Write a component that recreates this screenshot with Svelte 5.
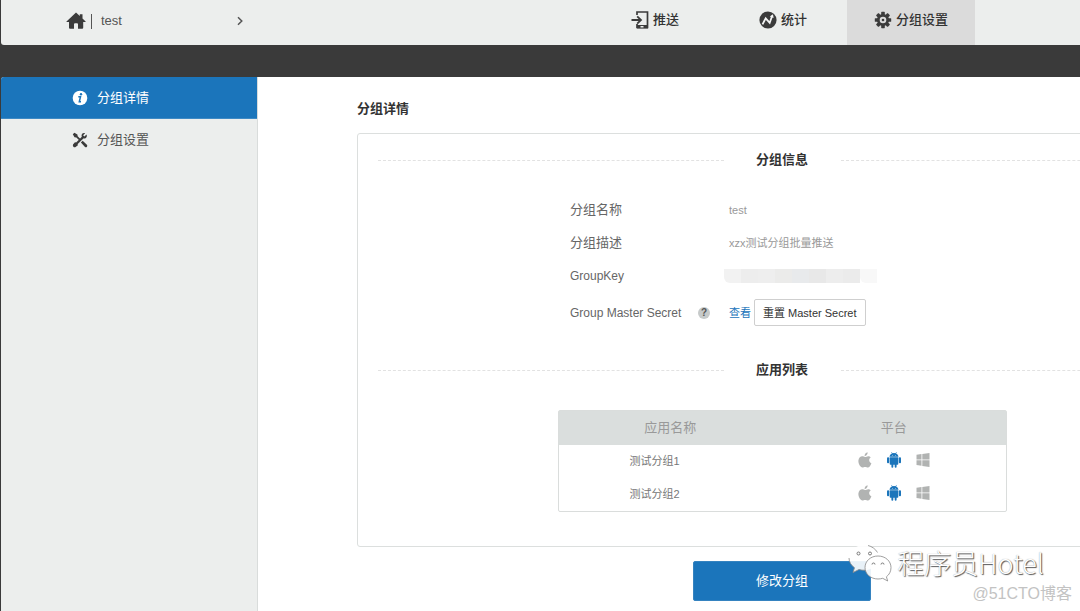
<script>
  const details = [
    { label: '分组名称', value: 'test' },
    { label: '分组描述', value: 'xzx测试分组批量推送' }
  ];
  const apps = ['测试分组1', '测试分组2'];
  const mask = ['#f2f2f2', '#ededed', '#eeeeee', '#ebebea', '#e8eaec', '#e8e8e8', '#ededed', '#ebebeb', '#f8f8f8'];
  const teeth = [0, 45, 90, 135, 180, 225, 270, 315];
</script>

<div class="page">
  <header>
    <div class="brand">
      <a class="home" href="#home" aria-label="Home">
        <svg width="20" height="18" viewBox="0 0 20 18"><path fill="#3b3b3b" d="M10 .5 13.800 4V2.200h2.700v4.300l3.100 2.900q.4.700-.4.700h-2v5.600q0 1-1 1h-4.200v-4.500q0-1-1-1H9q-1 0-1 1v4.500H4q-1 0-1-1v-5.600H.9q-.8 0-.4-.7z" /></svg>
      </a>
      <span class="bar"></span>
      <span class="name">test</span>
      <svg width="8" height="10" viewBox="0 0 8 10"><path d="M2 1.200 5.800 5 2 8.800" fill="none" stroke="#555" stroke-width="1.500" /></svg>
    </div>
    <nav class="tabs">
      <a href="#push">
        <svg width="18" height="18" viewBox="0 0 18 18"><path d="M6 4V1h10.500v15.500H6V13" fill="none" stroke="#3b3b3b" stroke-width="1.700" /><path d="M6 14h11v3.500H6z" fill="#3b3b3b" /><path d="M9.500 15h3v1.500h-3z" fill="#eceeed" /><path d="M.5 9h9M6.200 5.300 10 9l-3.800 3.700" fill="none" stroke="#3b3b3b" stroke-width="1.800" /></svg>
        推送
      </a>
      <a href="#stats">
        <svg width="18" height="18" viewBox="0 0 18 18"><circle cx="9" cy="9" r="8.600" fill="#3b3b3b" /><path d="m3.500 13.300 3.200-6 4 4.500 2.500-7" fill="none" stroke="#f4f5f5" stroke-width="1.800" /><path d="m10.800 5.400 3.200-2.200.6 3.800z" fill="#f4f5f5" /></svg>
        统计
      </a>
      <a class="current" href="#settings">
        <svg width="18" height="18" viewBox="0 0 18 18">
          <g fill="#3b3b3b">{#each teeth as angle}<path d="M7.200 4V1.400q0-.6.600-.6h2.400q.6 0 .6.600V4z" transform="rotate({angle} 9 9)" />{/each}</g>
          <circle cx="9" cy="9" r="4.700" fill="none" stroke="#3b3b3b" stroke-width="2.800" /><circle cx="9" cy="9" r="1.300" fill="#3b3b3b" />
        </svg>
        分组设置
      </a>
    </nav>
  </header>

  <div class="body">
    <aside>
      <a class="active" href="#detail">
        <svg width="16" height="16" viewBox="0 0 16 16"><circle cx="8" cy="8" r="7.300" fill="#fff" /><circle cx="9" cy="4.200" r="1.200" fill="#1b75bb" /><path d="M6.300 6.700H8.500L7.300 11.700H9" fill="none" stroke="#1b75bb" stroke-width="1.500" /></svg>
        分组详情
      </a>
      <a href="#config">
        <svg width="16" height="16" viewBox="0 0 16 16"><path d="m3.200 13 8.400-8.400" stroke="#3b3b3b" stroke-width="2.200" /><path d="M14.500 2.400 12.400 4.500l-1.300-1.300 2-2C11 .3 8.900 2.300 9.700 4.600l1.600 1.700c2.400.8 4.400-1.500 3.200-3.900z" fill="#3b3b3b" /><path d="M1 12.500 3.200 10l2.900 2.900-2.500 2.200q-1.300.6-2.200-.4T1 12.500z" fill="#3b3b3b" /><path d="m.8 2.300 1.600-1.600 3 1.700.3 1.900 3 3-1.300 1.300-3-3-1.900-.4z" fill="#3b3b3b" /><path d="m8.900 10.600 1.800-1.800 4.400 4.200q.5 1.200-.3 1.900t-1.800.1z" fill="#3b3b3b" /></svg>
        分组设置
      </a>
    </aside>

    <main>
      <h1>分组详情</h1>
      <section class="card">
        <h2>分组信息</h2>
        <dl>
          {#each details as item}
            <div class="row"><dt>{item.label}</dt><dd>{item.value}</dd></div>
          {/each}
          <div class="row">
            <dt class="latin">GroupKey</dt>
            <dd class="mask">{#each mask as shade}<i style:background={shade}></i>{/each}</dd>
          </div>
          <div class="row secret">
            <dt class="latin">Group Master Secret <span class="help">?</span></dt>
            <dd><a href="#view">查看</a><button type="button">重置 Master Secret</button></dd>
          </div>
        </dl>
        <h2>应用列表</h2>
        <div class="frame">
          <table>
            <thead><tr><th>应用名称</th><th>平台</th></tr></thead>
            <tbody>
              {#each apps as app}
                <tr>
                  <td class="app">{app}</td>
                  <td>
                    <div class="platforms">
                      <svg width="14" height="16" viewBox="0 0 14 16" fill="#b1b3b2"><path d="M9.600.2c.2 1.900-1.200 3.700-3 3.700C6.400 2.100 7.900.5 9.600.2z" /><path d="M12.800 5.300c-2.400 1.500-2 4.800.6 5.900-.7 2-2 4.300-3.600 4.400-1 0-1.400-.7-2.600-.7-1.300 0-1.800.7-2.700.7C2.300 15.600.2 11.700.4 8.600.6 5.700 2.600 4.300 4.200 4.300c1.200 0 2 .7 2.900.7.9 0 1.800-.8 3.100-.8 1 0 2 .4 2.600 1.100z" /></svg>
                      <svg width="14" height="16" viewBox="0 0 14 16" fill="#1b75bb"><path d="M2.500 4.700C2.700 3.200 3.600 2 5 1.400L4.200.3l.4-.2.9 1.100q1.500-.5 3 0L9.400.1l.4.2L9 1.400c1.400.6 2.300 1.800 2.500 3.300zM2.700 5.300h8.600v6.600q0 .8-.8.800H9.600v2.100q0 1-.9 1t-1-1v-2.100H6.300v2.100q0 1-1 1t-.9-1v-2.100h-.9q-.8 0-.8-.8z" /><rect x="0" y="5.200" width="2.200" height="6" rx="1" /><rect x="11.800" y="5.200" width="2.200" height="6" rx="1" /><path fill="#fff" d="M5 2.900h.8v.7H5zM8.200 2.900H9v.7h-.8z" /></svg>
                      <svg width="14" height="16" viewBox="0 0 14 16" fill="#b1b3b2"><path d="m.5 2.800 5-.7v5.400h-5zM6.300 2 13.500 1v6.500H6.300zM.5 8.300h5v5.400l-5-.7zM6.300 8.300h7.200V15l-7.200-1.100z" /></svg>
                    </div>
                  </td>
                </tr>
              {/each}
            </tbody>
          </table>
        </div>
      </section>
      <button class="submit" type="button">修改分组</button>
    </main>
  </div>

  <div class="watermark">
    <svg width="44" height="38" viewBox="0 0 44 38">
      <path d="M16 1C7.700 1 1 6.700 1 14c0 4 2.200 7.300 5.500 9.700L5 28.500l6-3q2.400.7 5 .7c8.300 0 15-5.500 15-12.500S24.300 1 16 1z" fill="#fff" fill-opacity=".9" />
      <path d="M1 14c0 4 2.200 7.300 5.500 9.700L5 28.500l6-3q3 .9 6 .7M20 1.500c4 1 7.500 3.500 9.500 7" fill="none" stroke="#888" stroke-width=".8" />
      <path d="M30 12c-7.300 0-13 5-13 11.500S22.700 35 30 35q2.500 0 4.700-.7l5 2.700-1.300-4.200c3-2.200 4.600-5.500 4.600-9.300C43 17 37.300 12 30 12z" fill="#fff" fill-opacity=".9" stroke="#888" stroke-width=".8" />
      <g fill="none" stroke="#777" stroke-width="1"><circle cx="10.500" cy="9.500" r="1.500" /><circle cx="22" cy="9.500" r="1.500" /><path d="M24 20.500a1.500 1.500 0 0 1 3 0M33 20.500a1.500 1.500 0 0 1 3 0" /></g>
    </svg>
    <span class="author">程序员Hotel</span>
  </div>
  <span class="source">@51CTO博客</span>
</div>

<style>
  :global(body) { margin: 0; background: #3a3a3a; }
  .page { position: relative; display: flex; flex-direction: column; min-height: 100vh; overflow: hidden; padding-left: 1px; box-sizing: border-box; font: 13px/20px "Liberation Sans", "Noto Sans CJK SC", sans-serif; color: #555; }
  a { color: inherit; text-decoration: none; }
  svg { display: block; flex: none; }
  header { display: flex; justify-content: space-between; height: 45px; margin-bottom: 32px; background: #eceeed; border-radius: 0 0 0 3px; }
  .brand { display: flex; align-items: center; width: 178px; padding: 0 0 3px 65px; }
  .bar { width: 1px; height: 15px; margin: 0 9px 0 5px; background: #555; }
  .name { flex: 1; }
  .tabs { display: flex; padding-right: 105px; }
  .tabs a { display: flex; justify-content: center; gap: 4px; width: 128px; padding-top: 10px; box-sizing: border-box; color: #333; font-weight: 500; }
  .tabs svg { margin-top: 1px; }
  .tabs .current { background: #dbdbdb; }
  .body { display: flex; flex: 1; }
  aside { width: 256px; flex: none; border-right: 1px solid #d9dcdb; background: #eceeed; border-radius: 3px 0 0 0; overflow: hidden; }
  aside a { display: flex; align-items: center; gap: 9px; height: 41px; padding-left: 71px; }
  aside .active { background: #1b75bb; color: #fff; border-bottom: 1px solid #3e8ac5; }
  main { flex: 1; min-width: 850px; padding: 22px 99px 11px; background: #fff; }
  h1, h2, dl, dd { margin: 0; }
  h1 { margin-bottom: 14px; font-size: 13px; line-height: 20px; color: #333; }
  .card { padding: 16px 20px 34px; border: 1px solid #dcdfde; border-radius: 3px; }
  h2 { display: grid; grid-template-columns: 1fr 117px 1fr; align-items: center; font-size: 13px; line-height: 20px; text-align: center; color: #333; }
  h2::before, h2::after { content: ""; border-top: 1px dashed #e2e2e2; }
  dl { width: 424px; margin: 23px auto 27px; }
  .row { display: grid; grid-template-columns: 159px 1fr; align-items: center; height: 33px; color: #666; }
  .row .latin { font-size: 12px; }
  .row dd { font-size: 11px; color: #999; }
  .row .mask { display: flex; margin-left: -5px; }
  .mask i { width: 17px; height: 14px; }
  .mask i:first-child { border-radius: 0 0 0 6px; }
  .mask i:last-child { border-radius: 0 0 0 6px; }
  .row.secret { height: 41px; }
  .secret dt { display: flex; align-items: center; justify-content: space-between; padding-right: 19px; }
  .help { width: 12px; height: 12px; border-radius: 50%; background: #c6caca; color: #555; font: bold 10px/12px "Liberation Sans", sans-serif; text-align: center; }
  .row.secret dd { display: flex; align-items: center; gap: 3px; color: #1b75bb; }
  .secret button { height: 27px; padding: 0 8px; border: 1px solid #cfcfcf; border-radius: 2px; background: #fff; color: #333; font: 11px/20px "Liberation Sans", "Noto Sans CJK SC", sans-serif; white-space: nowrap; }
  .frame { width: 447px; margin: 30px auto 0; border: 1px solid #dadddc; border-radius: 2px; }
  table { width: 100%; border-collapse: collapse; table-layout: fixed; }
  th { height: 34px; padding: 0; background: #dadedd; color: #999; font-weight: 400; }
  td { height: 33px; padding: 0; box-sizing: border-box; font-size: 11px; color: #777; }
  td.app { padding: 0 0 2px 71px; }
  .platforms { display: flex; justify-content: center; gap: 15px; padding-bottom: 4px; }
  .submit { display: block; width: 178px; height: 40px; margin: 14px auto 0; padding: 0; border: 1px solid #3583c0; border-radius: 2px; background: #1b75bb; color: #fff; font: 13px/20px "Liberation Sans", "Noto Sans CJK SC", sans-serif; }
  .watermark { position: absolute; right: 36px; bottom: 30px; display: flex; align-items: center; gap: 5px; }
  .author { color: #fff; font: 300 27px/36px "Noto Sans CJK SC", sans-serif; text-shadow: 1px 1px 1px #555, 0 0 1px #999; }
  .source { position: absolute; right: 8px; bottom: 8px; font: 16px/20px "Liberation Sans", "Noto Sans CJK SC", sans-serif; color: #c3c3c3; }
</style>
